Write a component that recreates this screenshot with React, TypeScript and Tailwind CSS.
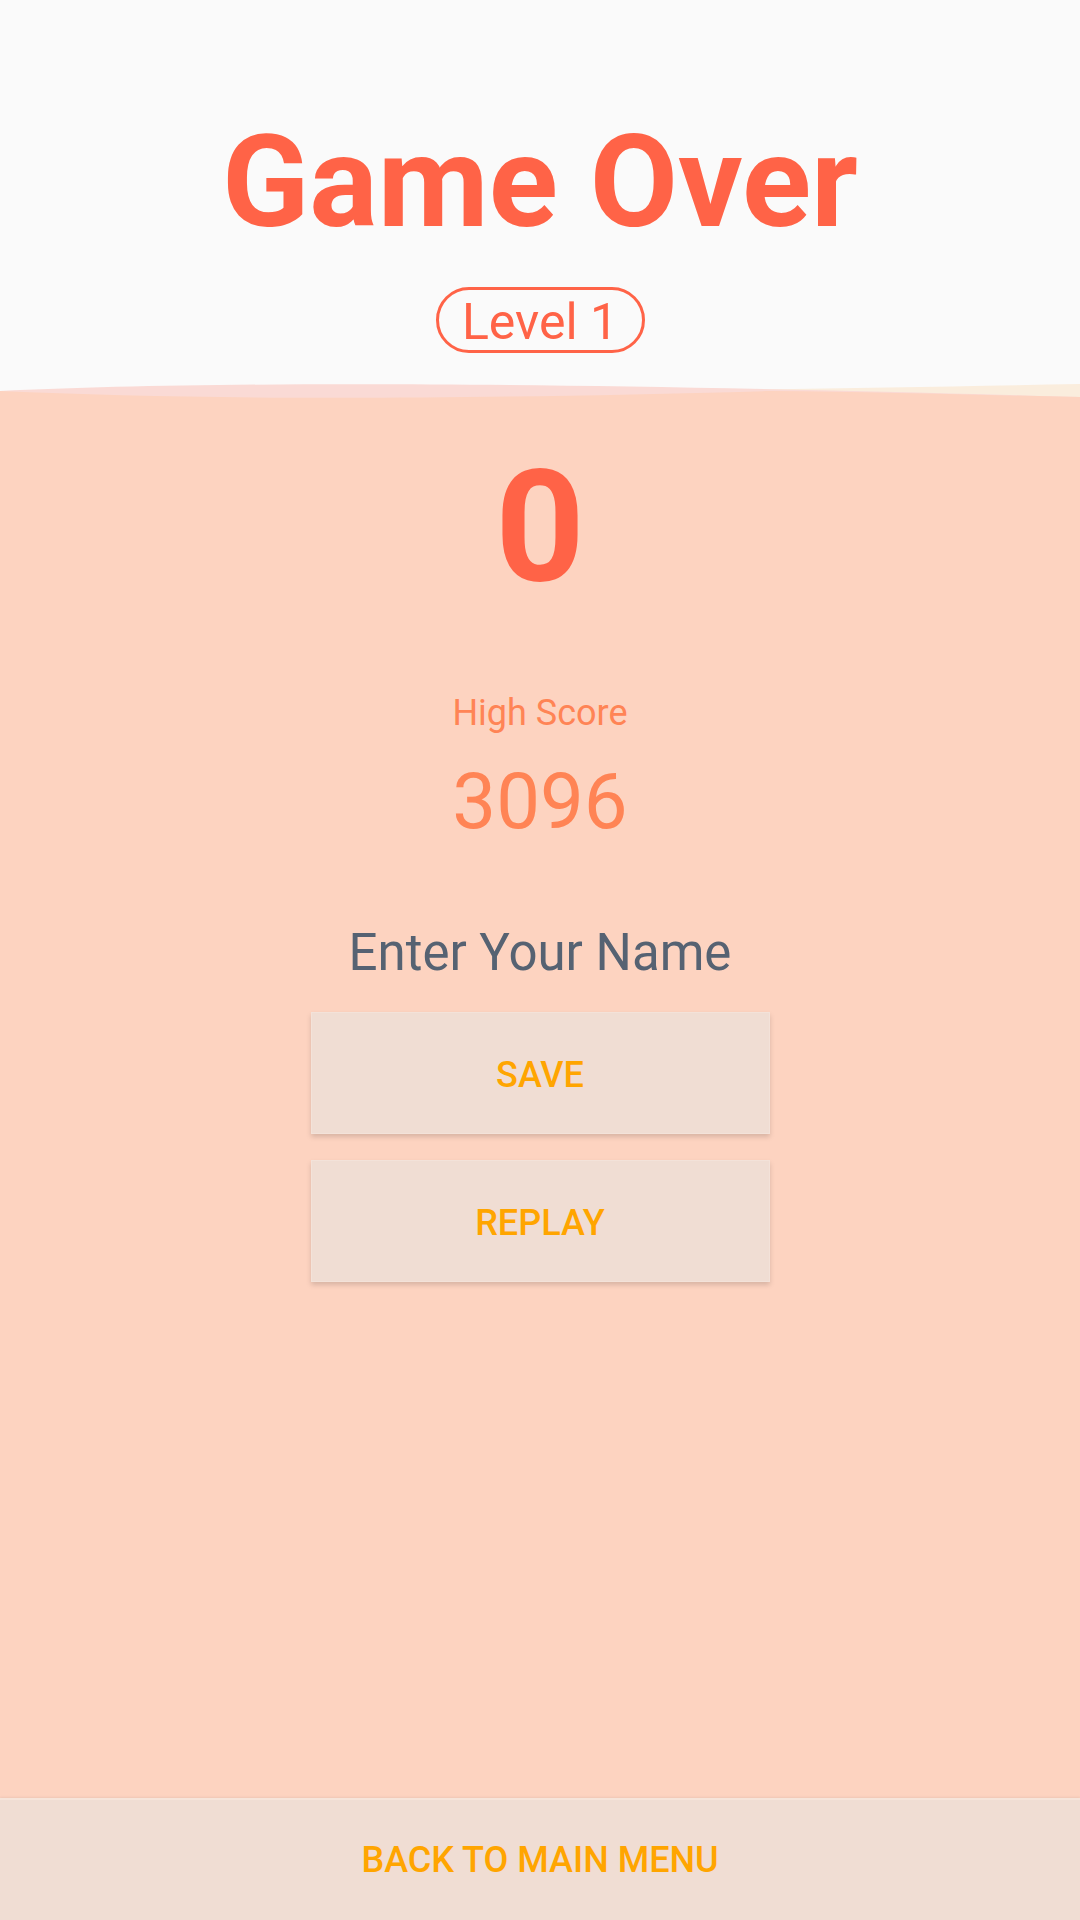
import React from "react";

export default function App() {
  return (
    <div
      className="w-[1080px] min-h-[1920px] flex flex-col bg-[#fdd3c0]"
      style={{ fontFamily: "Roboto, 'Noto Sans', sans-serif" }}
    >
      {/* Header */}
      <div className="h-[380px] bg-[#fafafa] flex flex-col items-center pt-[118px]">
        <h1 className="text-[128px] leading-none font-bold text-[#ff6347]">Game Over</h1>
        <div className="mt-[41px] w-[209px] h-[66px] rounded-full border-[3px] border-[#ff6347] flex items-center justify-center pt-[4px]">
          <span className="text-[50px] leading-none text-[#ff6347]">Level 1</span>
        </div>
      </div>
      {/* Wave */}
      <svg
        className="block w-[1080px] h-[20px] bg-[#fafafa]"
        viewBox="0 0 1080 20"
        preserveAspectRatio="none"
      >
        <path d="M0,20 L0,16 C 400,15 700,11 1080,4 L1080,20 Z" fill="#faeddd" />
        <path d="M0,11 C 200,2 500,0 1080,17 L1080,20 L0,20 Z" fill="#fadad5" />
        <path d="M0,11 C 200,20 450,20 770,11 C 880,12 980,15 1080,17 L1080,20 L0,20 Z" fill="#fdd3c0" />
      </svg>
      {/* Body */}
      <div className="flex-1 flex flex-col items-center">
        <div className="mt-[49px] text-[156px] leading-none font-bold text-[#ff6347]">0</div>
        <div className="mt-[90px] text-[36px] leading-none text-[#ff8455]">High Score</div>
        <div className="mt-[32px] text-[78px] leading-none text-[#ff8455]">3096</div>
        <div className="mt-[86px] text-[51px] leading-none text-[#566272]">Enter Your Name</div>
        <button className="mt-[34px] w-[459px] h-[122px] bg-[#f0ddd3] flex items-center justify-center pt-[3px] shadow-[0_3px_5px_rgba(0,0,0,0.15)] border border-[#f3e2d9]">
          <span className="text-[36px] leading-none font-medium text-[#ffa500]">SAVE</span>
        </button>
        <button className="mt-[26px] w-[459px] h-[122px] bg-[#f0ddd3] flex items-center justify-center pt-[3px] shadow-[0_3px_5px_rgba(0,0,0,0.15)] border border-[#f3e2d9]">
          <span className="text-[36px] leading-none font-medium text-[#ffa500]">REPLAY</span>
        </button>
      </div>
      {/* Bottom bar */}
      <button className="h-[122px] w-[1080px] bg-[#f0ddd3] flex items-center justify-center border-t-2 border-[#f6e4da] shadow-[0_-1px_2px_rgba(0,0,0,0.06)]">
        <span className="text-[36px] leading-none font-medium text-[#ffa500]">BACK TO MAIN MENU</span>
      </button>
    </div>
  );
}
